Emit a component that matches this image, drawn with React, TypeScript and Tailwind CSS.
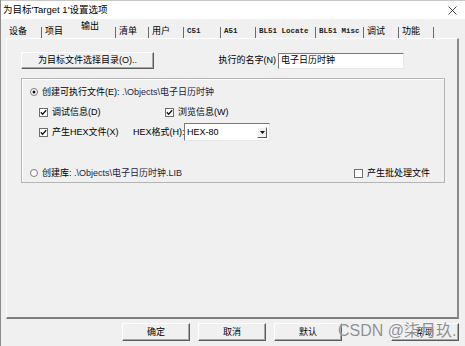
import React from "react";

const Check = ({ checked = true }: { checked?: boolean }) => (
  <svg width="9" height="9" viewBox="0 0 9 9" className="shrink-0">
    <rect x="0.5" y="0.5" width="8" height="8" fill="white" stroke="#6e6e6e" />
    {checked && <path d="M1.8 4.2 L3.6 6.2 L7.2 2.2" fill="none" stroke="#111" strokeWidth="1.3" />}
  </svg>
);

const Radio = ({ on = false }: { on?: boolean }) => (
  <svg width="8" height="8" viewBox="0 0 8 8" className="shrink-0">
    <circle cx="4" cy="4" r="3.5" fill="white" stroke="#7a7a7a" />
    {on && <circle cx="4" cy="4" r="1.5" fill="#111" />}
  </svg>
);

const Btn = ({ children, w }: { children: React.ReactNode; w: string }) => (
  <div
    className={`${w} h-[18px] shrink-0 flex items-center justify-center bg-[#f0f0f0] border border-t-white border-l-white border-r-[#5a5a5a] border-b-[#5a5a5a] shadow-[inset_-1px_-1px_0_#a8a8a8] text-[9px] leading-none`}
  >
    {children}
  </div>
);

type Tab = { label: string; w: string; sep: boolean; mono?: boolean; sel?: boolean };

const tabs: Tab[] = [
  { label: "设备", w: "w-[36px]", sep: true },
  { label: "项目", w: "w-[36px]", sep: false },
  { label: "输出", w: "w-[38px]", sep: true, sel: true },
  { label: "清单", w: "w-[33px]", sep: true },
  { label: "用户", w: "w-[35px]", sep: true },
  { label: "C51", w: "w-[37px]", sep: true, mono: true },
  { label: "A51", w: "w-[35px]", sep: true, mono: true },
  { label: "BL51 Locate", w: "w-[60px]", sep: true, mono: true },
  { label: "BL51 Misc", w: "w-[48px]", sep: true, mono: true },
  { label: "调试", w: "w-[35px]", sep: true },
  { label: "功能", w: "w-[35px]", sep: true },
];

export default function App() {
  return (
    <div className="w-[465px] h-[346px] bg-[#f0f0f0] flex flex-col overflow-hidden relative border-l border-[#8c8c8c] text-black font-['Liberation_Sans','Noto_Sans_CJK_SC',sans-serif]">
      {/* title bar */}
      <div className="h-[19px] shrink-0 bg-white flex items-center justify-between pl-[2px] pr-[8px] border-t border-[#c8c8c8]">
        <span className="text-[9.5px] leading-none">为目标'Target 1'设置选项</span>
        <svg width="9" height="9" viewBox="0 0 9 9">
          <path d="M0.5 0.5 L8.5 8.5 M8.5 0.5 L0.5 8.5" stroke="#333" strokeWidth="0.9" />
        </svg>
      </div>

      {/* tabs */}
      <div className="h-[19px] shrink-0 flex items-stretch pl-[5px]">
        {tabs.map((t) => (
          <div key={t.label} className={`${t.w} shrink-0 flex items-end justify-between pl-[3px]`}>
            <span
              className={`whitespace-nowrap leading-[11px] ${
                t.mono ? "font-['Liberation_Mono',monospace] text-[7.5px] font-bold text-[#222]" : "text-[9px]"
              } ${t.sel ? "mb-[6px]" : "mb-[1px]"}`}
            >
              {t.label}
            </span>
            {t.sep ? <span className="w-px h-[11px] bg-[#6a6a6a]" /> : <span />}
          </div>
        ))}
      </div>

      {/* tab page */}
      <div className="ml-[5px] w-[453px] h-[281px] shrink-0 flex flex-col border-l border-t border-l-white border-t-white border-r-2 border-b-2 border-r-[#8a8a8a] border-b-[#7e7e7e] text-[9px] leading-[11px]">
        {/* row 1 */}
        <div className="mt-[13px] ml-[14px] flex items-center">
          <div className="w-[133px] h-[17px] flex items-center justify-center border border-t-white border-l-white border-r-[#5a5a5a] border-b-[#5a5a5a] shadow-[inset_-1px_-1px_0_#a8a8a8]">
            为目标文件选择目录(O)..
          </div>
          <div className="w-[122px] text-right">执行的名字(N)</div>
          <div className="ml-[2px] w-[126px] h-[16px] bg-white border border-t-[#7a7a7a] border-l-[#7a7a7a] border-r-[#e8e8e8] border-b-[#e8e8e8] flex items-center pl-[2px]">
            电子日历时钟
          </div>
        </div>

        {/* group box */}
        <div className="mt-[9px] ml-[14px] w-[424px] h-[105px] border border-[#b4b4b4] shadow-[inset_1px_1px_0_white] flex flex-col">
          <div className="mt-[7px] h-[12px] pl-[8px] flex items-center gap-[4px]">
            <Radio on />
            <span>
              创建可执行文件(E): <span className="text-[#1c2440]">.\Objects\电子日历时钟</span>
            </span>
          </div>
          <div className="mt-[8px] h-[12px] pl-[17px] flex items-center">
            <div className="w-[126px] flex items-center gap-[4px]">
              <Check />
              <span>调试信息(D)</span>
            </div>
            <div className="flex items-center gap-[4px]">
              <Check />
              <span>浏览信息(W)</span>
            </div>
          </div>
          <div className="mt-[5px] h-[18px] pl-[17px] flex items-center">
            <div className="w-[94px] flex items-center gap-[4px]">
              <Check />
              <span>产生HEX文件(X)</span>
            </div>
            <span className="w-[50px] whitespace-nowrap">HEX格式(H):</span>
            <div className="ml-[1px] w-[86px] h-[18px] bg-white border border-t-[#7a7a7a] border-l-[#7a7a7a] border-r-[#e8e8e8] border-b-[#e8e8e8] flex items-center justify-between pl-[2px] pr-[2px]">
              <span>HEX-80</span>
              <div className="w-[10px] h-[11px] bg-[#f0f0f0] border border-t-white border-l-white border-r-[#5a5a5a] border-b-[#5a5a5a] flex items-center justify-center">
                <svg width="5" height="3" viewBox="0 0 5 3">
                  <path d="M0 0 L5 0 L2.5 3 Z" fill="#111" />
                </svg>
              </div>
            </div>
          </div>
          <div className="mt-auto mb-[3px] h-[12px] pl-[8px] pr-[14px] flex items-center justify-between">
            <div className="flex items-center gap-[4px]">
              <Radio />
              <span>
                创建库: <span className="text-[#1c2440]">.\Objects\电子日历时钟.LIB</span>
              </span>
            </div>
            <div className="flex items-center gap-[4px]">
              <Check checked={false} />
              <span>产生批处理文件</span>
            </div>
          </div>
        </div>
      </div>

      {/* bottom buttons */}
      <div className="mt-[4px] pl-[121px] flex items-center">
        <Btn w="w-[68px]">确定</Btn>
        <div className="ml-[8px]">
          <Btn w="w-[68px]">取消</Btn>
        </div>
        <div className="ml-[8px]">
          <Btn w="w-[68px]">默认</Btn>
        </div>
        <div className="ml-[49px]">
          <Btn w="w-[68px]">帮助</Btn>
        </div>
      </div>

      {/* watermark */}
      <div className="absolute left-[337px] top-[321px] text-[16px] leading-[20px] text-[#8f8f8f] whitespace-nowrap [text-shadow:0_0_1px_#ffffff] font-['Liberation_Sans','Noto_Sans_CJK_SC',sans-serif]">
        CSDN @柒月玖.
      </div>
    </div>
  );
}
